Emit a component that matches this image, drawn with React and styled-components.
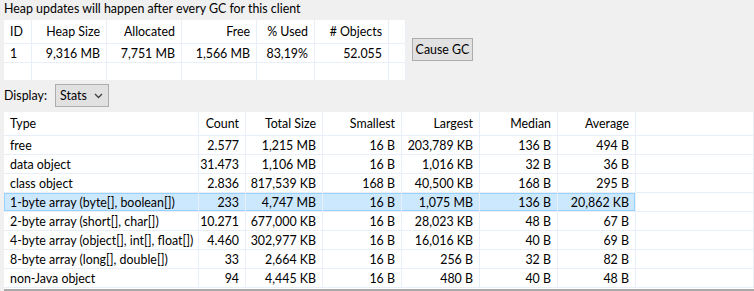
import React from 'react';
import styled, { createGlobalStyle, css } from 'styled-components';

const GRID = `#e9eff8`;
const FONT_SIZE = `12.4px`;

const GlobalStyle = createGlobalStyle`
  html, body {
    margin: 0;
    padding: 0;
    background: #f0f0f0;
  }
  body {
    font-family: Lato, "Noto Sans", sans-serif;
    font-size: ${FONT_SIZE};
    color: #000;
  }
`;

const Page = styled.div`
  width: 754px;
  height: 291px;
  overflow: hidden;
  display: flex;
  flex-direction: column;
  padding-left: 4px;
  box-sizing: border-box;
`;

const Title = styled.div`
  height: 20px;
  line-height: 17px;
`;

const TopRow = styled.div`
  display: flex;
  align-items: flex-start;
  gap: 6px;
`;

const Grid = styled.table`
  border-collapse: separate;
  border-spacing: 0;
  table-layout: fixed;
  background: #fff;
  font-size: ${FONT_SIZE};
`;

const cellBase = css`
  box-sizing: border-box;
  padding: 0 ${(p) => (p.$right ? `6px` : `0`)} 0 ${(p) => (p.$right ? `0` : `6px`)};
  text-align: ${(p) => (p.$right ? `right` : `left`)};
  white-space: nowrap;
  overflow: hidden;
  border-right: 1px solid ${GRID};
  border-bottom: 1px solid ${GRID};
  font-weight: normal;
`;

const HeadCell = styled.th`
  ${cellBase}
  height: 24px;
`;

const Cell = styled.td`
  ${cellBase}
  height: ${(p) => p.$h || 19}px;
  ${(p) => p.$last && css`border-bottom: none;`}
  ${(p) => p.$selected && css`
    background: #cce8ff;
    box-shadow: inset 0 1px #99d1ff, inset 0 -1px #99d1ff
      ${p.$first ? `, inset 1px 0 #99d1ff` : ``}
      ${p.$end ? `, inset -1px 0 #99d1ff` : ``};
  `}
`;

const Button = styled.button`
  margin-top: 18px;
  width: 61px;
  height: 23px;
  padding: 0;
  border: 1px solid #adadad;
  background: #e1e1e1;
  font-family: inherit;
  font-size: ${FONT_SIZE};
  color: #000;
`;

const DisplayRow = styled.div`
  display: flex;
  align-items: center;
  gap: 8px;
  margin-top: 4px;
  height: 23px;
`;

const Select = styled.div`
  box-sizing: border-box;
  width: 54px;
  height: 23px;
  border: 1px solid #adadad;
  background: #e1e1e1;
  display: flex;
  align-items: center;
  justify-content: space-between;
  padding: 0 5px 0 4px;
`;

const ListWrap = styled.div`
  margin-top: 5px;
  height: 177px;
  overflow: hidden;
  background: #fff;
  border-bottom: 2px solid #a9a9a9;
`;

const topCols = [28, 75, 75, 75, 58, 74, 17];
const topHead = [`ID`, `Heap Size`, `Allocated`, `Free`, `% Used`, `# Objects`, ``];
const topData = [`1`, `9,316 MB`, `7,751 MB`, `1,566 MB`, `83,19%`, `52.055`, ``];

const cols = [195, 47, 77, 79, 78, 78, 78, 118];
const head = [`Type`, `Count`, `Total Size`, `Smallest`, `Largest`, `Median`, `Average`, ``];
const rows = [
  [`free`, `2.577`, `1,215 MB`, `16 B`, `203,789 KB`, `136 B`, `494 B`],
  [`data object`, `31.473`, `1,106 MB`, `16 B`, `1,016 KB`, `32 B`, `36 B`],
  [`class object`, `2.836`, `817,539 KB`, `168 B`, `40,500 KB`, `168 B`, `295 B`],
  [`1-byte array (byte[], boolean[])`, `233`, `4,747 MB`, `16 B`, `1,075 MB`, `136 B`, `20,862 KB`],
  [`2-byte array (short[], char[])`, `10.271`, `677,000 KB`, `16 B`, `28,023 KB`, `48 B`, `67 B`],
  [`4-byte array (object[], int[], float[])`, `4.460`, `302,977 KB`, `16 B`, `16,016 KB`, `40 B`, `69 B`],
  [`8-byte array (long[], double[])`, `33`, `2,664 KB`, `16 B`, `256 B`, `32 B`, `82 B`],
  [`non-Java object`, `94`, `4,445 KB`, `16 B`, `480 B`, `40 B`, `48 B`],
];
const SELECTED = 3;

const Chevron = () => (
  <svg width="9" height="6" viewBox="0 0 9 6">
    <polyline points="1,1 4.5,4.5 8,1" fill="none" stroke="#404040" strokeWidth="1.3" />
  </svg>
);

export default function App() {
  return (
    <Page>
      <GlobalStyle />
      <Title>Heap updates will happen after every GC for this client</Title>
      <TopRow>
        <Grid style={{ width: 402 }}>
          <colgroup>
            {topCols.map((w, i) => <col key={i} style={{ width: w }} />)}
          </colgroup>
          <thead>
            <tr>
              {topHead.map((h, i) => <HeadCell key={i} $right={i > 0}>{h}</HeadCell>)}
            </tr>
          </thead>
          <tbody>
            <tr>
              {topData.map((d, i) => <Cell key={i} $right={i > 0}>{d}</Cell>)}
            </tr>
            <tr>
              {topData.map((d, i) => <Cell key={i} $h={17} $last />)}
            </tr>
          </tbody>
        </Grid>
        <Button>Cause GC</Button>
      </TopRow>
      <DisplayRow>
        <span>Display:</span>
        <Select>
          <span>Stats</span>
          <Chevron />
        </Select>
      </DisplayRow>
      <ListWrap>
        <Grid style={{ width: 750 }}>
          <colgroup>
            {cols.map((w, i) => <col key={i} style={{ width: w }} />)}
          </colgroup>
          <thead>
            <tr>
              {head.map((h, i) => <HeadCell key={i} $right={i > 0}>{h}</HeadCell>)}
            </tr>
          </thead>
          <tbody>
            {rows.map((r, ri) => (
              <tr key={ri}>
                {[...r, ``].map((d, i) => (
                  <Cell
                    key={i}
                    $right={i > 0}
                    $selected={ri === SELECTED && i < 7}
                    $first={i === 0}
                    $end={i === 6}
                  >
                    {d}
                  </Cell>
                ))}
              </tr>
            ))}
          </tbody>
        </Grid>
      </ListWrap>
    </Page>
  );
}
